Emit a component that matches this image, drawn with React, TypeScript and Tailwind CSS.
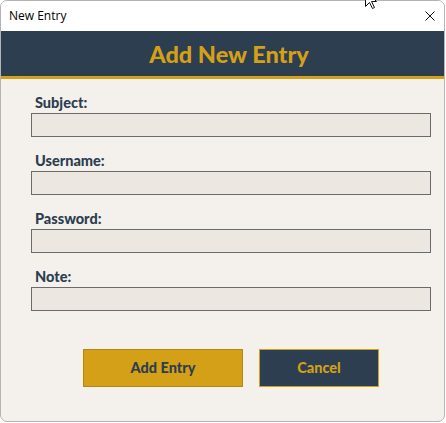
const FIELDS = ["Subject:", "Username:", "Password:", "Note:"];

const FONT = { fontFamily: "Lato, 'Open Sans', sans-serif" };

export default function App() {
  return (
    <div className="relative h-[423px] w-[446px] bg-white" style={FONT}>
      <div className="flex h-[422px] w-[445px] flex-col overflow-hidden rounded-[7px] border border-[#b4b4b4] bg-[#f4f1ec]">
        <TitleBar />
        <header className="flex h-[48px] items-center justify-center border-b-[3px] border-[#d4a017] bg-[#2c3e50] pl-[13px] pt-[1px]">
          <h1 className="text-[23.5px] leading-[28px] font-black text-[#d4a017]">Add New Entry</h1>
        </header>

        <div className="flex w-[430px] flex-col gap-[15px] pt-[15px] pl-[30px]">
          {FIELDS.map((label) => (
            <div key={label} className="flex flex-col gap-[1px]">
              <label className="ml-1 text-[14.5px] leading-[18px] font-black text-[#2c3e50]">{label}</label>
              <input
                type="text"
                className="h-[24px] w-[400px] border border-[#6b6b6b] bg-[#ece7e1] px-1 text-[13px] outline-none"
              />
            </div>
          ))}

          <div className="mt-[23px] flex justify-center gap-4">
            <button
              type="button"
              className="h-[38px] w-[160px] border border-[#b8860b] bg-[#d4a017] text-[14.5px] font-black text-[#2c3e50]"
            >
              Add Entry
            </button>
            <button
              type="button"
              className="h-[38px] w-[120px] border border-[#d4a017] bg-[#2c3e50] text-[14.5px] font-black text-[#d4a017]"
            >
              Cancel
            </button>
          </div>
        </div>
      </div>
      <Cursor />
    </div>
  );
}

function TitleBar() {
  return (
    <div className="flex h-[30px] items-center justify-between bg-white pl-[8px] pr-[9px]">
      <span className="text-[12px] text-black" style={{ fontFamily: "'Open Sans', sans-serif" }}>
        New Entry
      </span>
      <svg width="10" height="10" viewBox="0 0 10 10" className="mt-[-1px]">
        <path d="M0.5 0.5 L9.5 9.5 M9.5 0.5 L0.5 9.5" stroke="#111" strokeWidth="1" />
      </svg>
    </div>
  );
}

// mouse pointer sitting at the top edge, only its tail is in view
function Cursor() {
  return (
    <svg width="13" height="20" viewBox="0 0 13 20" className="absolute top-[-10px] left-[365px]">
      <path
        d="M0.5 0.5 L0.5 16.5 L4.5 12.5 L7.5 18.5 L9.5 17.5 L6.5 11.5 L11.5 11.5 Z"
        fill="#fff"
        stroke="#111"
        strokeWidth="1"
      />
    </svg>
  );
}
